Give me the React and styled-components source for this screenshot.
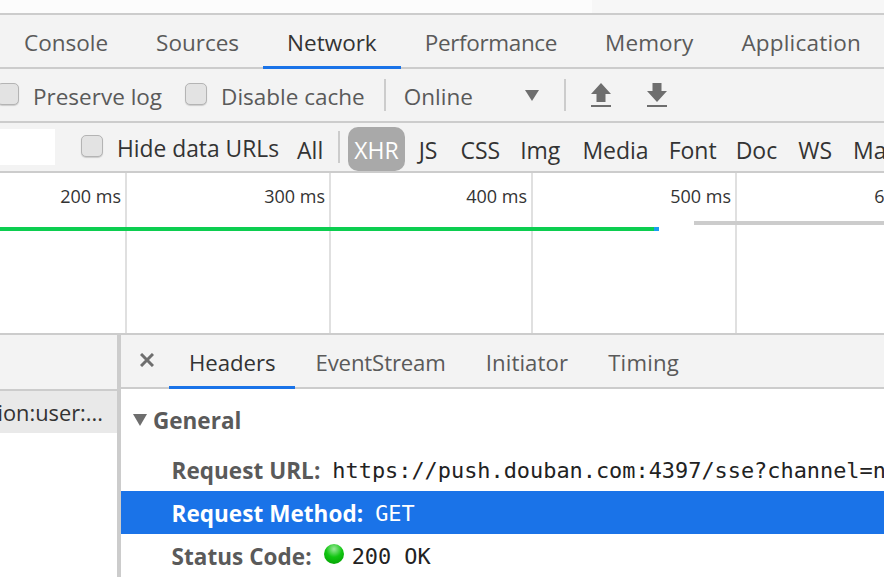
import React from "react";
import styled, { createGlobalStyle } from "styled-components";

const Global = createGlobalStyle`
  html, body { margin: 0; padding: 0; background: #fff; overflow: hidden; }
  #root { width: 884px; height: 577px; overflow: hidden; }
  * { box-sizing: border-box; }
`;
const UI = `"Open Sans", "Noto Sans", sans-serif`;

const Page = styled.div`
  width: 884px; height: 577px; display: flex; flex-direction: column; overflow: hidden;
  font-family: ${UI}; font-size: 22.5px; color: #5a5a5a; background: #f3f3f3;
`;
const TopStrip = styled.div`
  height: 15px; flex: none; border-bottom: 2px solid #ccc; display: flex;
`;
const StripLeft = styled.div`width: 592px; background: #fcfcfc;`;
const StripRight = styled.div`flex: 1; background: #f7f7f7;`;

const TabBar = styled.div`
  height: 54px; flex: none; display: flex; border-bottom: 2px solid #ccc;
`;
const Tab = styled.div`
  height: 54px; padding: 3px 24px 0; display: flex; align-items: center; white-space: nowrap;
  letter-spacing: ${p => p.$sp || 0}px;
  color: ${p => (p.$active ? "#333" : "#5a5a5a")};
  border-bottom: 3px solid ${p => (p.$active ? "#1a73e8" : "transparent")};
`;
const Toolbar = styled.div`
  height: 54px; flex: none; display: flex; align-items: center; border-bottom: 2px solid #ccc; white-space: nowrap;
`;
const Check = styled.span`
  width: 22px; height: 22px; flex: none; border-radius: 5px; background: #e3e3e3;
  border: 1.5px solid #b4b4b4; box-shadow: 0 1px 1px #ccc; display: inline-block;
  margin-top: -2px;
`;
const CheckLabel = styled.label`
  display: flex; align-items: center; gap: 14px; margin-left: ${p => p.$left}px;
  color: ${p => p.$color || "#5a5a5a"};
  font-size: ${p => p.$size || 22.5}px;
`;
const CheckText = styled.span`padding-top: 2px;`;
const Sep = styled.div`
  width: 2px; height: 32px; background: #ccc; flex: none; margin-left: ${p => p.$left}px;
`;
const ThrottleText = styled.span`margin-left: 18px; width: 121px; padding-top: 2px;`;
const IconBtn = styled.svg`flex: none; margin-left: ${p => p.$left}px; display: block;`;

const FilterBar = styled.div`
  height: 50px; flex: none; display: flex; align-items: center; border-bottom: 2px solid #ccc; white-space: nowrap; color: #333;
`;
const FilterInput = styled.div`width: 55px; height: 36px; background: #fff; flex: none;`;
const FilterChip = styled.span`
  flex: none; margin-left: ${p => p.$left}px; height: 44px; display: flex; align-items: center; padding: 2px ${p => (p.$active ? "6px" : "0")} 0;
  font-size: 23px;
  border-radius: 10px; background: ${p => (p.$active ? "#a9a9a9" : "transparent")}; color: ${p => (p.$active ? "#fff" : "#333")};
  position: relative; top: 2px;
`;

const Overview = styled.div`
  height: 162px; flex: none; position: relative; background: #fff; border-bottom: 2px solid #ccc; display: flex;
`;
const GridCell = styled.div`
  width: ${p => p.$w}px; flex: none; height: 100%; border-right: 2px solid #e0e0e0; text-align: right;
  padding: 11px 4px 0 0; font-size: 18px; line-height: 24px; color: #333;
`;
const GreenBar = styled.div`
  position: absolute; left: 0; top: 54px; width: 659px; height: 4px; background: #0cce50;
  &::after { content: ""; position: absolute; right: 0; top: 0; width: 5px; height: 4px; background: #1a9df0; }
`;
const GreyBar = styled.div`
  position: absolute; left: 694px; right: 0; top: 48px; height: 4px; background: #ccc;
`;

const Split = styled.div`flex: 1; display: flex; min-height: 0;`;
const LeftPane = styled.div`
  width: 121px; flex: none; background: #fff; border-right: 4px solid #ccc; display: flex; flex-direction: column;
`;
const LeftHead = styled.div`height: 56px; flex: none; background: #f3f3f3; border-bottom: 2px solid #ccc;`;
const LeftRow = styled.div`
  height: 42px; flex: none; background: #e9e9e9; color: #333; font-size: 21.8px; display: flex; align-items: center; justify-content: flex-end;
  white-space: nowrap; overflow: hidden; padding: 0 14px 0 0;
`;
const RightPane = styled.div`flex: 1; min-width: 0; background: #fff; display: flex; flex-direction: column;`;
const DetailTabs = styled.div`
  height: 54px; flex: none; background: #f3f3f3; border-bottom: 2px solid #ccc; display: flex; align-items: flex-start; position: relative;
  font-size: 22.2px;
`;
const CloseIcon = styled.svg`flex: none; margin: 18px 0 0 19px;`;
const DetailTab = styled.div`
  height: 54px; padding: 3px 20px 0; margin-left: ${p => p.$left || 0}px; display: flex; align-items: center; white-space: nowrap;
  letter-spacing: ${p => p.$sp || 0}px;
  color: ${p => (p.$active ? "#333" : "#5a5a5a")};
  border-bottom: 3px solid ${p => (p.$active ? "#1a73e8" : "transparent")};
`;
const SectionTitle = styled.div`
  height: 59px; flex: none; display: flex; align-items: center; gap: 6px; padding: 5px 0 2px 12px; font-weight: 700; color: #5a5a5a; font-size: 22.5px;
`;
const Row = styled.div`
  height: 43px; flex: none; display: flex; align-items: center; gap: 12px; padding: 1px 0 0 50.5px; white-space: nowrap; overflow: hidden;
  background: ${p => (p.$selected ? "#1a73e8" : "transparent")};
  color: ${p => (p.$selected ? "#fff" : "#5a5a5a")};
`;
const Key = styled.span`font-weight: 700; font-size: 22.5px; letter-spacing: 0.05px;`;
const Val = styled.span`
  font-family: "DejaVu Sans Mono", "Liberation Mono", monospace; font-size: 21.9px; color: ${p => (p.$selected ? "#fff" : "#222")};
`;
const Dot = styled.span`
  width: 20px; height: 20px; border-radius: 50%; flex: none; margin: -4px -4px 0 0;
  background: radial-gradient(circle at 50% 25%, #9be89b 0%, #12c612 45%, #009a00 100%);
`;

const UpIcon = ({ left }) => (
  <IconBtn $left={left} width="20" height="24" viewBox="0 0 20 24">
    <path d="M10 0 L20 11 H14.5 V19 H5.5 V11 H0 Z M0 22 H20 V24 H0 Z" fill="#6e6e6e" />
  </IconBtn>
);
const DownIcon = ({ left }) => (
  <IconBtn $left={left} width="20" height="24" viewBox="0 0 20 24">
    <path d="M5.5 0 H14.5 V8 H20 L10 19 L0 8 H5.5 Z M0 22 H20 V24 H0 Z" fill="#6e6e6e" />
  </IconBtn>
);

export default function App() {
  return (
    <Page>
      <Global />
      <TopStrip><StripLeft /><StripRight /></TopStrip>
      <TabBar>
        <Tab>Console</Tab>
        <Tab>Sources</Tab>
        <Tab $active>Network</Tab>
        <Tab $sp={-0.35}>Performance</Tab>
        <Tab $sp={0.1}>Memory</Tab>
        <Tab $sp={0.2}>Application</Tab>
      </TabBar>
      <Toolbar>
        <CheckLabel $left={-3}><Check /><CheckText>Preserve log</CheckText></CheckLabel>
        <CheckLabel $left={23}><Check /><CheckText>Disable cache</CheckText></CheckLabel>
        <Sep $left={19} />
        <ThrottleText>Online</ThrottleText>
        <IconBtn $left={0} width="14" height="11" viewBox="0 0 14 11"><path d="M0 0 H14 L7 11 Z" fill="#6e6e6e" /></IconBtn>
        <Sep $left={25} />
        <UpIcon left={25} />
        <DownIcon left={36} />
      </Toolbar>
      <FilterBar>
        <FilterInput />
        <CheckLabel $left={26} $color="#333" $size={22.8}><Check /><CheckText>Hide data URLs</CheckText></CheckLabel>
        <FilterChip $left={18}>All</FilterChip>
        <Sep $left={15} />
        <FilterChip $left={8} $active>XHR</FilterChip>
        <FilterChip $left={14}>JS</FilterChip>
        <FilterChip $left={23}>CSS</FilterChip>
        <FilterChip $left={20}>Img</FilterChip>
        <FilterChip $left={22}>Media</FilterChip>
        <FilterChip $left={20}>Font</FilterChip>
        <FilterChip $left={19}>Doc</FilterChip>
        <FilterChip $left={21}>WS</FilterChip>
        <FilterChip $left={21}>Manifest</FilterChip>
      </FilterBar>
      <Overview>
        <GridCell $w={127}>200 ms</GridCell>
        <GridCell $w={204}>300 ms</GridCell>
        <GridCell $w={202}>400 ms</GridCell>
        <GridCell $w={204}>500 ms</GridCell>
        <GridCell $w={204}>600 ms</GridCell>
        <GreenBar />
        <GreyBar />
      </Overview>
      <Split>
        <LeftPane>
          <LeftHead />
          <LeftRow>ion:user:...</LeftRow>
        </LeftPane>
        <RightPane>
          <DetailTabs>
            <CloseIcon width="14" height="14" viewBox="0 0 14 14"><path d="M1 1 L13 13 M13 1 L1 13" stroke="#6e6e6e" strokeWidth="3" /></CloseIcon>
            <DetailTab $left={15} $active $sp={-0.05}>Headers</DetailTab>
            <DetailTab $sp={-0.15}>EventStream</DetailTab>
            <DetailTab $sp={0.1}>Initiator</DetailTab>
            <DetailTab $sp={0.2}>Timing</DetailTab>
          </DetailTabs>
          <SectionTitle>
            <svg width="14" height="12" viewBox="0 0 14 12"><path d="M0 0 H14 L7 12 Z" fill="#6e6e6e" /></svg>
            General
          </SectionTitle>
          <Row><Key>Request URL:</Key><Val>https://push.douban.com:4397/sse?channel=notification:user:1</Val></Row>
          <Row $selected><Key>Request Method:</Key><Val $selected>GET</Val></Row>
          <Row><Key>Status Code:</Key><Dot /><Val>200 OK</Val></Row>
        </RightPane>
      </Split>
    </Page>
  );
}
